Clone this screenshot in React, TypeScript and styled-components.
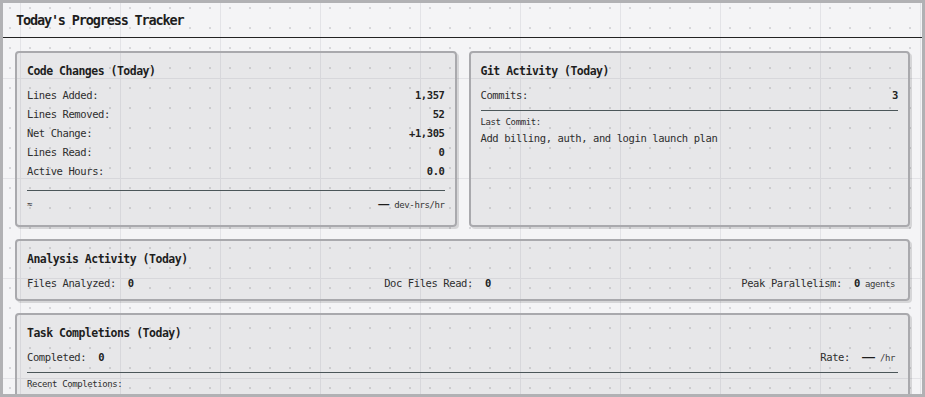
import styled, { createGlobalStyle } from "styled-components";

const mono = `"DejaVu Sans Mono", "Liberation Mono", monospace`;

const GlobalStyle = createGlobalStyle`
  html, body {
    margin: 0;
    padding: 0;
  }
  body {
    background: #f4f4f6;
    font-family: ${mono};
    color: #2e2e2e;
  }
`;

const codeRows = [
    { label: "Lines Added:", value: "1,357" },
    { label: "Lines Removed:", value: "52" },
    { label: "Net Change:", value: "+1,305" },
    { label: "Lines Read:", value: "0" },
    { label: "Active Hours:", value: "0.0" },
];

export default function App() {
    return (
        <>
            <GlobalStyle />
            <Frame>
                <Header>
                    <Heading>Today's Progress Tracker</Heading>
                </Header>

                <Board>
                    <Pair>
                        <Card>
                            <CardTitle>Code Changes (Today)</CardTitle>
                            {codeRows.map((r) => (
                                <Row key={r.label}>
                                    <span>{r.label}</span>
                                    <Value>{r.value}</Value>
                                </Row>
                            ))}
                            <Rule $top={10} />
                            <Footer>
                                <Small>≈</Small>
                                <Small>
                                    <Dash $size={11}>—</Dash> dev-hrs/hr
                                </Small>
                            </Footer>
                        </Card>

                        <Card>
                            <CardTitle>Git Activity (Today)</CardTitle>
                            <Row>
                                <span>Commits:</span>
                                <Value>3</Value>
                            </Row>
                            <Rule $top={6} />
                            <Caption>Last Commit:</Caption>
                            <Message>Add billing, auth, and login launch plan</Message>
                        </Card>
                    </Pair>

                    <Card $pb={7}>
                        <CardTitle>Analysis Activity (Today)</CardTitle>
                        <Row $mt={3}>
                            <Stat>
                                Files Analyzed:<StatValue>0</StatValue>
                            </Stat>
                            <Stat>
                                Doc Files Read:<StatValue>0</StatValue>
                            </Stat>
                            <Stat>
                                Peak Parallelism:<StatValue>0</StatValue>
                                <Unit>agents</Unit>
                            </Stat>
                        </Row>
                    </Card>

                    <Card>
                        <CardTitle>Task Completions (Today)</CardTitle>
                        <Row>
                            <Stat>
                                Completed:<StatValue>0</StatValue>
                            </Stat>
                            <Stat>
                                Rate:
                                <StatValue>
                                    <Dash $size={13}>—</Dash>
                                </StatValue>
                                <Unit>/hr</Unit>
                            </Stat>
                        </Row>
                        <Rule $top={6} />
                        <Caption>Recent Completions:</Caption>
                    </Card>
                </Board>
            </Frame>
        </>
    );
}

const Frame = styled.div`
    box-sizing: border-box;
    width: 100vw;
    height: 100vh;
    overflow: hidden;
    border: 3px solid #b1b1b4;
    background-color: #f4f4f6;
    background-image:
        radial-gradient(circle, #d5d5d9 0.7px, transparent 1.2px),
        linear-gradient(to right, #e3e3e7 1px, transparent 1px),
        linear-gradient(to bottom, #e3e3e7 1px, transparent 1px);
    background-size: 20px 20px, 100px 100px, 100px 100px;
    background-position: -3px -5px, 17px 0, 0 75px;
`;

const Header = styled.div`
    height: 34px;
    display: flex;
    align-items: center;
    padding: 0 13px;
    border-bottom: 1px solid #232323;
`;

const Heading = styled.h1`
    margin: 0;
    font-size: 13.5px;
    font-weight: bold;
    letter-spacing: -1.15px;
    color: #1e1e1e;
`;

const Board = styled.div`
    display: grid;
    gap: 12px;
    padding: 13px 12px 0 12px;
`;

const Pair = styled.div`
    display: grid;
    grid-template-columns: 1fr 1fr;
    gap: 12px;
`;

const Card = styled.section<{ $pb?: number }>`
    border: 2px solid #a9a9ad;
    border-radius: 4px;
    background: rgba(0, 0, 0, 0.05);
    box-shadow: 2px 2px 0 rgba(0, 0, 0, 0.12);
    padding: 11px 10px ${(p) => p.$pb ?? 10}px 10px;
    font-size: 10.5px;
    letter-spacing: -0.4px;
`;

const CardTitle = styled.h2`
    margin: 0 0 6px 0;
    font-size: 11.5px;
    line-height: 15px;
    font-weight: bold;
    letter-spacing: -0.5px;
    color: #1e1e1e;
`;

const Row = styled.div<{ $mt?: number }>`
    display: flex;
    justify-content: space-between;
    align-items: center;
    height: 19px;
    margin-top: ${(p) => p.$mt ?? 0}px;
    white-space: pre;
`;

const Value = styled.b`
    font-weight: bold;
    color: #222;
`;

const Stat = styled.span`
    display: flex;
    align-items: baseline;
    white-space: pre;
`;

const StatValue = styled(Value)`
    margin-left: 12px;
`;

const Unit = styled.span`
    font-size: 9px;
    margin-left: 5px;
    margin-right: 3px;
    color: #3a3a3a;
`;

const Rule = styled.div<{ $top: number }>`
    margin-top: ${(p) => p.$top}px;
    border-top: 1.5px solid #4b5659;
`;

const Footer = styled.div`
    display: flex;
    justify-content: space-between;
    padding: 7px 0 3px 0;
    line-height: 13px;
`;

const Small = styled.span`
    font-size: 9px;
    color: #333;
`;

const Dash = styled.span<{ $size: number }>`
    font-family: "Liberation Sans", sans-serif;
    font-size: ${(p) => p.$size}px;
    font-weight: bold;
    letter-spacing: 0;
    color: #1e1e1e;
`;

const Caption = styled.div`
    margin-top: 5px;
    font-size: 9px;
    line-height: 12px;
`;

const Message = styled.div`
    margin-top: 2px;
    line-height: 16px;
`;
